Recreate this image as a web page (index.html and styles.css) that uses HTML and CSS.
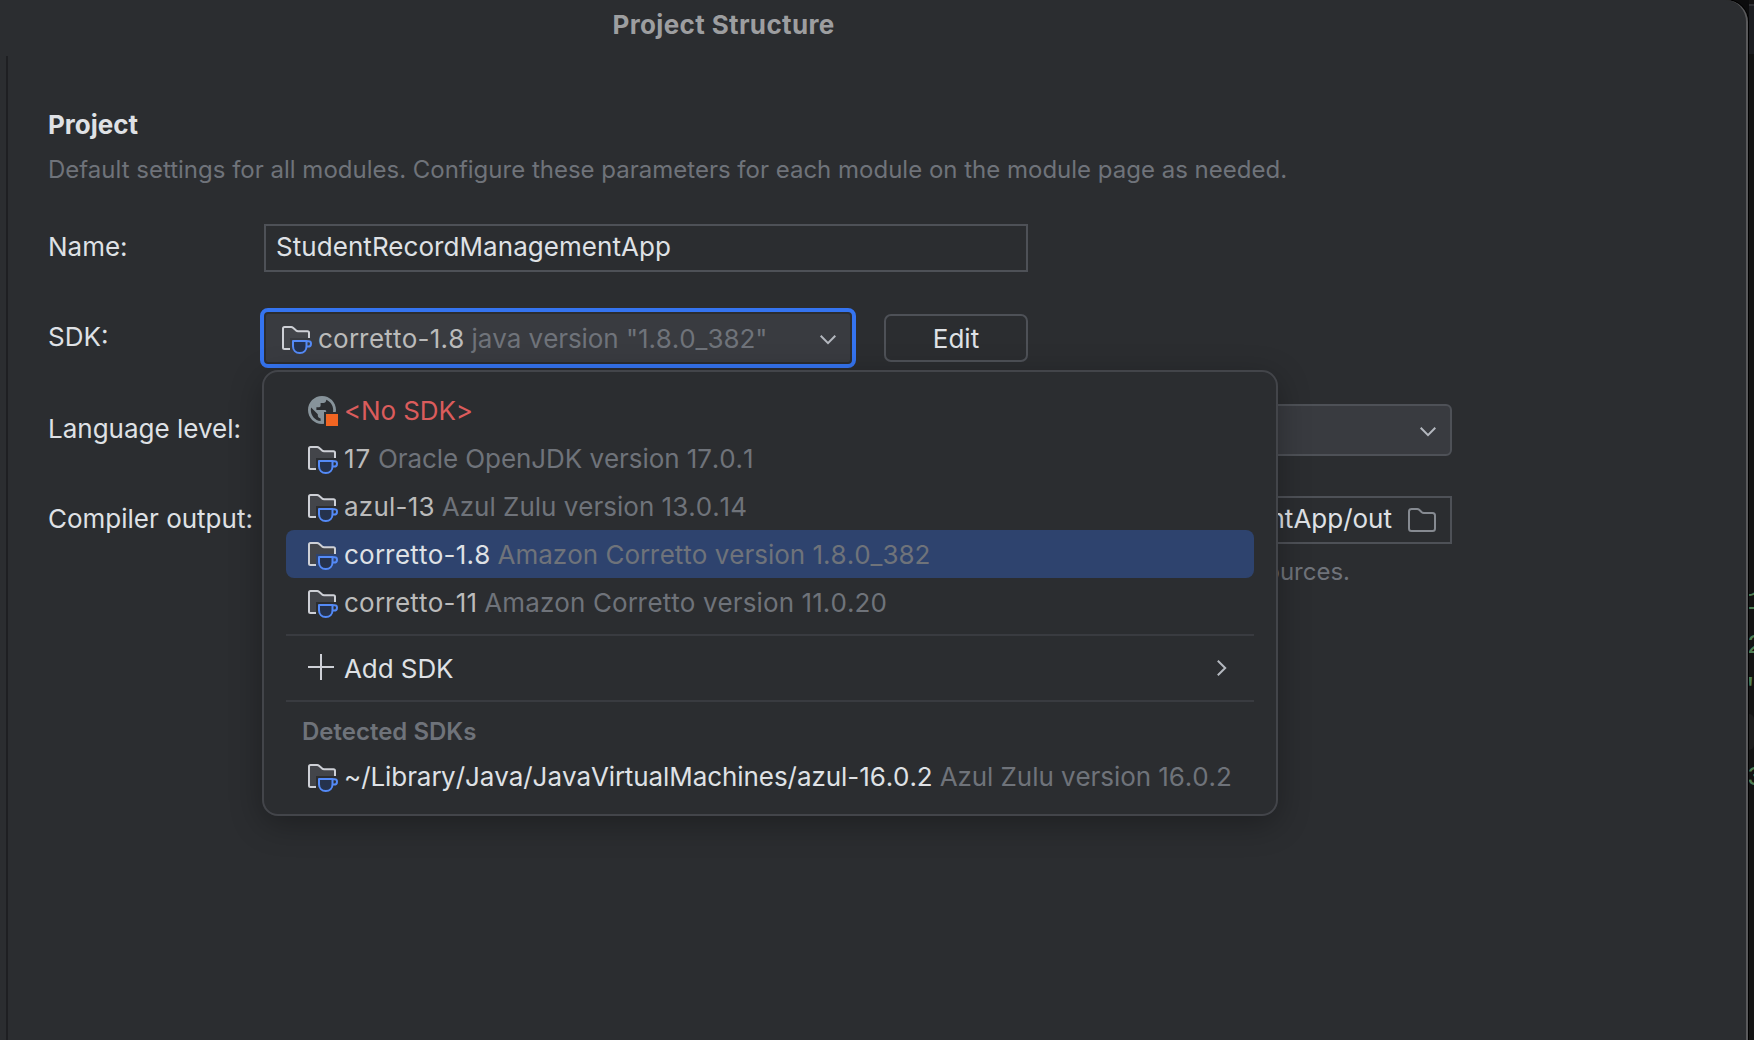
FILE: index.html
```html
<!DOCTYPE html>
<html lang="en">
<head>
<meta charset="utf-8">
<title>Project Structure</title>
<link rel="stylesheet" href="styles.css">
</head>
<body>
<svg class="sprite" aria-hidden="true">
  <symbol id="jdk" viewBox="0 0 32 32">
    <path d="M3 26V6.500Q3 5 4.500 5H11.200Q12.200 5 13 5.700L16.200 8.600Q17 9.200 18 9.200H27.500Q29 9.200 29 10.700V16H10V27H4.500Q3 27 3 25.500Z" fill="#43454a"/>
    <path d="M10 27H4.500Q3 27 3 25.500V6.500Q3 5 4.500 5H11.200Q12.200 5 13 5.700L16.200 8.600Q17 9.200 18 9.200H27.500Q29 9.200 29 10.700V16" fill="none" stroke="#ced0d6" stroke-width="2"/>
    <path d="M13 19H26.500V24.200C26.500 28 24 31 19.800 31S13 28 13 24.200Z" fill="#25324d" stroke="#548af7" stroke-width="2" stroke-linejoin="round"/>
    <path d="M26.500 19.300H28.500Q31 19.300 31 21.700Q31 24.600 28 24.600H26.500" fill="none" stroke="#548af7" stroke-width="2"/>
  </symbol>
  <symbol id="chevron" viewBox="0 0 16 10">
    <path d="M.7.800 8 8.200 15.300.800" fill="none" stroke="#b4b8bf" stroke-width="2"/>
  </symbol>
</svg>
<div class="screen">
  <main class="dialog">
    <header class="titlebar">Project Structure</header>
    <section class="content">
      <h1 class="heading">Project</h1>
      <p class="description">Default settings for all modules. Configure these parameters for each module on the module page as needed.</p>

      <div class="row row-name">
        <label class="label">Name:</label>
        <div class="field name-field">StudentRecordManagementApp</div>
      </div>

      <div class="row row-sdk">
        <label class="label">SDK:</label>
        <div class="sdk">
          <div class="sdk-combo">
            <svg class="jdk"><use href="#jdk"/></svg>
            <span class="item-name">corretto-1.8</span><span class="version tight">java version "1.8.0_382"</span>
            <svg class="chevron"><use href="#chevron"/></svg>
          </div>
          <div class="popup">
            <div class="item">
              <svg class="jdk" viewBox="0 0 32 32">
                <path transform="translate(-.8 -.8) scale(1.400)" fill="#87939a" d="M12 2C6.480 2 2 6.480 2 12s4.480 10 10 10 10-4.480 10-10S17.520 2 12 2zm-1 17.930c-3.950-.49-7-3.850-7-7.930 0-.62.080-1.210.210-1.790L9 15v1c0 1.100.9 2 2 2v1.930zm6.900-2.540c-.26-.81-1-1.390-1.900-1.390h-1v-3c0-.55-.45-1-1-1H8v-2h2c.55 0 1-.45 1-1V7h2c1.100 0 2-.9 2-2v-.410c2.930 1.190 5 4.060 5 7.410 0 2.080-.8 3.970-2.100 5.390z"/>
                <path d="M18 18H32V32H18Z" fill="#2b2d30"/>
                <path d="M20 20H32V32H20Z" fill="#f26522"/>
              </svg>
              <span class="item-name none">&lt;No SDK&gt;</span>
            </div>
            <div class="item"><svg class="jdk"><use href="#jdk"/></svg><span class="item-name short">17</span><span class="version tight">Oracle OpenJDK version 17.0.1</span></div>
            <div class="item"><svg class="jdk"><use href="#jdk"/></svg><span class="item-name">azul-13</span><span class="version">Azul Zulu version 13.0.14</span></div>
            <div class="item selected"><svg class="jdk"><use href="#jdk"/></svg><span class="item-name">corretto-1.8</span><span class="version">Amazon Corretto version 1.8.0_382</span></div>
            <div class="item"><svg class="jdk"><use href="#jdk"/></svg><span class="item-name">corretto-11</span><span class="version wide">Amazon Corretto version 11.0.20</span></div>
            <div class="separator"></div>
            <div class="item add">
              <svg class="jdk" viewBox="0 0 32 32"><path d="M2 15H28M15 2V28" stroke="#ced0d6" stroke-width="2"/></svg>
              <span class="item-name bright">Add SDK</span>
              <svg class="submenu" viewBox="0 0 10 16"><path d="M.8.700 8.200 8 .8 15.300" fill="none" stroke="#b4b8bf" stroke-width="2"/></svg>
            </div>
            <div class="separator"></div>
            <div class="group">Detected SDKs</div>
            <div class="item"><svg class="jdk"><use href="#jdk"/></svg><span class="item-name bright">~/Library/Java/JavaVirtualMachines/azul-16.0.2</span><span class="version tight">Azul Zulu version 16.0.2</span></div>
          </div>
        </div>
        <button class="edit">Edit</button>
      </div>

      <div class="row row-level">
        <label class="label">Language level:</label>
        <div class="level-combo"><svg class="chevron"><use href="#chevron"/></svg></div>
      </div>

      <div class="row row-output">
        <label class="label">Compiler output:</label>
        <div class="field output-field">
          <span class="path">StudentRecordManagementApp/out</span>
          <svg class="browse" viewBox="0 0 28 24"><path d="M1 3.500Q1 1 3.500 1H9.200Q10.400 1 11.200 1.800L13.800 4.300Q14.600 5 15.800 5H24.500Q27 5 27 7.500V20.500Q27 23 24.500 23H3.500Q1 23 1 20.500Z" fill="#2b2d30" stroke="#868a91" stroke-width="2"/></svg>
        </div>
      </div>
      <p class="hint">directories for the corresponding sources.</p>
    </section>
  </main>
  <aside class="editor">
    <div class="tabs"></div>
    <div class="active-line"></div>
    <span class="code line-a">1</span>
    <span class="code line-b">2</span>
    <span class="code line-c">'</span>
    <span class="code line-d">3</span>
  </aside>
</div>
</body>
</html>
```
FILE: styles.css
```css
* { box-sizing: border-box; }

body {
  margin: 0;
  overflow: hidden;
  background: #111;
  color: #dfe1e5;
  font: 400 26px/32px Inter, "Liberation Sans", sans-serif;
}

.sprite { position: absolute; width: 0; height: 0; }

.screen {
  display: grid;
  grid-template-columns: 1748px 6px;
  width: 1754px;
  height: 1040px;
  background: #0c0c0d;
}

.dialog {
  display: flex;
  flex-direction: column;
  background: #2b2d30;
  border-right: 2px solid #59595b;
  border-top-right-radius: 22px;
  box-shadow: 0 0 0 1px #000;
}

.titlebar {
  height: 56px;
  padding: 9px 0 0 612.5px;
  color: #9d9ea0;
  font-weight: 700;
  letter-spacing: .36px;
}

.content {
  flex: 1;
  margin-left: 6px;
  padding: 53px 0 0 40px;
  border-left: 2px solid #1e1f22;
}

.heading { margin: 0; font-size: 26px; line-height: 32px; font-weight: 700; }

.description {
  margin: 13px 0 0;
  color: #6f737a;
  font-size: 24px;
  line-height: 32px;
  white-space: nowrap;
}

.row { display: flex; align-items: center; }
.row-name { height: 48px; margin-top: 38px; }
.row-sdk { height: 60px; margin-top: 36px; }
.row-level { height: 52px; margin-top: 36px; }
.row-output { height: 48px; margin-top: 40px; }

.label { width: 216px; flex: none; padding-bottom: 2px; white-space: nowrap; }

.field {
  display: flex;
  align-items: center;
  height: 48px;
  border: 2px solid #4e5157;
}
.name-field { width: 764px; padding: 0 0 2px 10px; letter-spacing: .06px; }
.output-field {
  width: 1188px;
  padding-right: 14px;
  justify-content: flex-end;
  gap: 16px;
}
.path { padding-bottom: 2px; }
.browse { width: 28px; height: 24px; }

.sdk { position: relative; margin-left: -4px; }
.sdk-combo {
  display: flex;
  align-items: center;
  width: 596px;
  height: 60px;
  padding: 0 16px;
  background: #393b40;
  border: 4px solid #3574f0;
  border-radius: 8px;
  box-shadow: inset 0 0 0 2px #2b2d30;
}
.chevron { width: 16px; height: 10px; margin: 4px 0 0 auto; }
.jdk { width: 32px; height: 32px; margin-right: 6px; flex: none; overflow: visible; }

.item-name,
.version { padding-top: 2px; font-kerning: none; white-space: nowrap; }
.item-name { color: #bbbbbb; letter-spacing: .22px; }
.version { margin-left: 7px; color: #6f737a; }
.item .short { letter-spacing: .8px; }
.tight { letter-spacing: -.07px; }
.wide { letter-spacing: .09px; }

.edit {
  width: 144px;
  height: 48px;
  margin-left: 28px;
  padding: 2px 0 0;
  background: transparent;
  border: 2px solid #4e5157;
  border-radius: 7px;
  color: inherit;
  font: inherit;
}

.popup {
  position: absolute;
  z-index: 2;
  left: 2px;
  top: 62px;
  width: 1016px;
  height: 446px;
  padding: 14px 22px;
  background: #2b2d30;
  border: 2px solid #43454a;
  border-radius: 16px;
  box-shadow: 0 8px 32px rgba(0, 0, 0, .3);
}
.item {
  display: flex;
  align-items: center;
  height: 48px;
  padding-left: 20px;
  border-radius: 8px;
}
.selected { background: #2e436e; }
.selected .item-name, .item .bright { color: #dfe1e5; }
.item .bright { letter-spacing: -.07px; }
.item .none { color: #db5c5c; letter-spacing: -.12px; }
.separator { height: 2px; margin-top: 8px; background: #393b40; }
.add { height: 48px; margin-top: 8px; padding-right: 27px; }
.submenu { width: 10px; height: 16px; margin-left: auto; }
.group {
  height: 50px;
  padding: 14px 0 0 16px;
  color: #6f737a;
  font-size: 24px;
  font-weight: 600;
}

.level-combo {
  display: flex;
  align-items: center;
  width: 1188px;
  height: 52px;
  padding-right: 14px;
  background: #393b40;
  border: 2px solid #4e5157;
  border-radius: 6px;
}

.hint {
  width: 1302px;
  margin: 12px 0 0;
  color: #6f737a;
  font-size: 24px;
  text-align: right;
}

.editor {
  position: relative;
  overflow: hidden;
  margin-left: 1px;
  background: #131313;
}
.tabs { height: 50px; margin-top: 4px; background: #1c1d21; border-top: 2px solid #303135; }
.active-line { height: 36px; margin-top: 660px; background: #1d1d1d; border-radius: 0 6px 6px 0; }
.code {
  position: absolute;
  left: -2px;
  color: #4f7d54;
  font: 28px/32px "Liberation Mono", monospace;
}
.line-a { top: 586px; }
.line-b { top: 630px; }
.line-c { top: 674px; left: -7px; }
.line-d { top: 762px; }
```
